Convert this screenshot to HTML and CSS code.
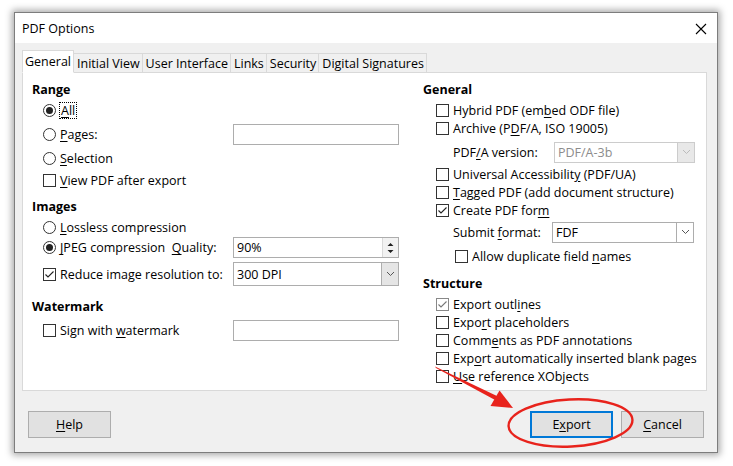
FILE: index.html
```html
<!DOCTYPE html>
<html>
<head>
<meta charset="utf-8">
<title>PDF Options</title>
<link rel="stylesheet" href="styles.css">
</head>
<body>
<div class="dialog">
  <div class="titlebar">
    <span class="title">PDF Options</span>
    <svg class="close" width="12" height="12" viewBox="0 0 12 12"><path d="M1 1L11 11M11 1L1 11" stroke="#000" stroke-width="1.1" fill="none"/></svg>
  </div>
  <div class="content">
    <div class="tabs">
      <div class="tab active">General</div>
      <div class="tab">Initial View</div>
      <div class="tab">User Interface</div>
      <div class="tab">Links</div>
      <div class="tab">Security</div>
      <div class="tab">Digital Signatures</div>
    </div>
    <div class="panel">
      <div class="col left">
        <div class="heading">Range</div>
        <div class="row r-all"><span class="radio on"></span><span class="focus"><u>A</u>ll</span></div>
        <div class="row r-pages"><span class="opt"><span class="radio"></span><span><u>P</u>ages:</span></span><span class="field"></span></div>
        <div class="row r-gap4"><span class="radio"></span><span><u>S</u>election</span></div>
        <div class="row r-gap4"><span class="box"></span><span><u>V</u>iew PDF after export</span></div>
        <div class="heading h-images">Images</div>
        <div class="row r-gap2"><span class="radio"></span><span><u>L</u>ossless compression</span></div>
        <div class="row r-jpeg"><span class="opt"><span class="radio on"></span><span><u>J</u>PEG compression&nbsp; <u>Q</u>uality:</span></span>
          <span class="field spin"><span class="val">90%</span><span class="spinbtn"><svg width="7" height="14" viewBox="0 0 7 14"><path d="M0.5 5L3.5 2L6.5 5Z M0.5 9L3.5 12L6.5 9Z" fill="#222"/></svg></span></span></div>
        <div class="row r-dpi"><span class="opt"><span class="box"><svg width="11" height="11" viewBox="0 0 11 11"><path d="M1.5 5.5L4 8L9.5 2.5" stroke="#222" stroke-width="1.1" fill="none"/></svg></span><span>Reduce ima<u>g</u>e resolution to:</span></span>
          <span class="field combo tall"><span class="val">300 DPI</span><span class="drop"><svg width="9" height="6" viewBox="0 0 9 6"><path d="M1 1L4.5 4.5L8 1" stroke="#555" stroke-width="1" fill="none"/></svg></span></span></div>
        <div class="heading h-water">Watermark</div>
        <div class="row r-sign"><span class="opt"><span class="box"></span><span>Sign with <u>w</u>atermark</span></span><span class="field"></span></div>
      </div>
      <div class="col right">
        <div class="heading">General</div>
        <div class="row r-gap2"><span class="box"></span><span>Hybrid PDF (em<u>b</u>ed ODF file)</span></div>
        <div class="row"><span class="box"></span><span>Archive (P<u>D</u>F/A, ISO 19005)</span></div>
        <div class="row r-sub r-pdfa"><span class="sublabel">PDF<u>/</u>A version:</span>
          <span class="field combo disabled"><span class="val">PDF/A-3b</span><span class="drop"><svg width="9" height="6" viewBox="0 0 9 6"><path d="M1 1L4.5 4.5L8 1" stroke="#bbb" stroke-width="1" fill="none"/></svg></span></span></div>
        <div class="row r-gap2"><span class="box"></span><span>Universal Accessibilit<u>y</u> (PDF/UA)</span></div>
        <div class="row"><span class="box"></span><span><u>T</u>agged PDF (add document structure)</span></div>
        <div class="row"><span class="box"><svg width="11" height="11" viewBox="0 0 11 11"><path d="M1.5 5.5L4 8L9.5 2.5" stroke="#222" stroke-width="1.1" fill="none"/></svg></span><span>Create PDF for<u>m</u></span></div>
        <div class="row r-sub r-submit"><span class="sublabel">Submit <u>f</u>ormat:</span>
          <span class="field combo submit"><span class="val">FDF</span><span class="drop"><svg width="9" height="6" viewBox="0 0 9 6"><path d="M1 1L4.5 4.5L8 1" stroke="#555" stroke-width="1" fill="none"/></svg></span></span></div>
        <div class="row r-gap4 r-indent"><span class="box"></span><span>Allow duplicate field <u>n</u>ames</span></div>
        <div class="heading h-struct">Structure</div>
        <div class="row r-gap2"><span class="box dim"><svg width="11" height="11" viewBox="0 0 11 11"><path d="M1.5 5.5L4 8L9.5 2.5" stroke="#777" stroke-width="1.1" fill="none"/></svg></span><span>Export outl<u>i</u>nes</span></div>
        <div class="row"><span class="box"></span><span>Expo<u>r</u>t placeholders</span></div>
        <div class="row"><span class="box"></span><span>Comm<u>e</u>nts as PDF annotations</span></div>
        <div class="row"><span class="box"></span><span>Exp<u>o</u>rt automatically inserted blank pages</span></div>
        <div class="row"><span class="box"></span><span><u>U</u>se reference XObjects</span></div>
      </div>
    </div>
    <div class="buttons">
      <button class="btn"><u>H</u>elp</button>
      <span class="spacer"></span>
      <button class="btn default">E<u>x</u>port</button>
      <button class="btn"><u>C</u>ancel</button>
    </div>
  </div>
</div>
<svg class="annot" width="733" height="466" viewBox="0 0 733 466">
  <ellipse cx="570.5" cy="423" rx="62" ry="23.5" transform="rotate(-3 570.5 423)" fill="none" stroke="#e8231c" stroke-width="2.4"/>
  <polygon points="435,366.5 436,368 496,400.5 498,396.5" fill="#e8231c"/>
  <polygon points="513,408 490.5,406 499.5,390.5" fill="#e8231c"/>
</svg>
</body>
</html>
```
FILE: styles.css
```css
* { box-sizing: border-box; }
body {
  margin: 0;
  background: #fff;
  font-family: "Open Sans", "Noto Sans", sans-serif;
  font-size: 12.5px;
  color: #000;
  width: 733px;
  height: 466px;
  overflow: hidden;
  position: relative;
}
u { text-decoration: underline; text-underline-offset: 2px; }
.dialog {
  margin: 12px 0 0 14px;
  width: 704px;
  height: 441px;
  border: 1px solid #7d7d7d;
  background: #f0f0f0;
  box-shadow: 0 0 7px 2px rgba(0,0,0,0.35);
  display: flex;
  flex-direction: column;
}
.titlebar {
  height: 30px;
  flex: none;
  background: #fff;
  display: flex;
  align-items: center;
  justify-content: space-between;
  padding: 1px 10px 0 7px;
}
.content {
  flex: 1;
  display: flex;
  flex-direction: column;
  padding: 8px 10px 0 7px;
}
.tabs {
  display: flex;
  align-items: flex-end;
  height: 22px;
  position: relative;
  z-index: 1;
  margin-bottom: -1px;
}
.tab {
  height: 20px;
  padding: 0 2px 0 3px;
  border: 1px solid #d9d9d9;
  border-left: none;
  background: #f0f0f0;
  line-height: 19px;
  white-space: nowrap;
}
.tab.active {
  height: 23px;
  border-left: 1px solid #d9d9d9;
  border-bottom: 1px solid #fff;
  background: #fff;
  padding: 0 2px 0 2px;
  line-height: 22px;
}
.panel {
  height: 319px;
  background: #fff;
  border: 1px solid #d9d9d9;
  display: flex;
  padding: 6px 0 0 9px;
}
.col { display: flex; flex-direction: column; }
.left { width: 367px; }
.right { width: 272px; margin-left: 24px; }
.heading { height: 20px; font-weight: bold; line-height: 21px; flex: none; }
.h-images { margin-top: 7px; }
.h-water { margin-top: 10px; }
.h-struct { margin-top: 8px; }
.row {
  height: 18px;
  display: flex;
  align-items: center;
  flex: none;
  white-space: nowrap;
}
.left .row { padding-left: 11px; }
.right .row { padding-left: 13px; }
.right .row.r-indent { padding-left: 32px; }
.right .row.r-sub { padding-left: 30px; }
.r-all { margin-top: 2px; }
.r-gap2 { margin-top: 2px; }
.r-gap4 { margin-top: 4px; }
.r-pages { margin-top: 4px; height: 22px; }
.r-jpeg { margin-top: 1px; height: 21px; }
.r-dpi { margin-top: 4px; height: 24px; }
.r-sign { margin-top: 4px; height: 20px; }
.r-pdfa { margin-top: 4px; height: 22px; }
.r-submit { margin-top: 2px; height: 22px; }
.opt { display: flex; align-items: center; width: 190px; flex: none; }
.radio {
  width: 13px; height: 13px;
  border: 1px solid #333;
  border-radius: 50%;
  background: #fff;
  margin-right: 4px;
  flex: none;
  display: flex;
  align-items: center;
  justify-content: center;
}
.radio.on::after {
  content: "";
  width: 7px; height: 7px;
  border-radius: 50%;
  background: #222;
}
.box {
  width: 13px; height: 13px;
  border: 1px solid #333;
  background: #fff;
  margin-right: 4px;
  flex: none;
  display: flex;
  align-items: center;
  justify-content: center;
}
.box.dim { border-color: #888; }
.focus { outline: 1px dotted #000; outline-offset: 0; padding: 0 1px; line-height: 15px; }
.field {
  width: 166px;
  height: 21px;
  border: 1px solid #adadad;
  background: #fff;
  display: flex;
  align-items: center;
  flex: none;
}
.field .val { flex: 1; padding-left: 3px; }
.field.tall { height: 24px; }
.spinbtn {
  width: 16px; height: 19px;
  border-left: 1px solid #d9d9d9;
  display: flex; align-items: center; justify-content: center;
  background: #f2f2f2;
}
.drop {
  width: 17px; align-self: stretch;
  border-left: 1px solid #adadad;
  background: #e5e5e5;
  display: flex; align-items: center; justify-content: center;
}
.sublabel { width: 101px; flex: none; }
.combo.disabled { width: 141px; border-color: #cccccc; color: #8c8c8c; }
.combo.disabled .drop { border-left-color: #cccccc; background: #e8e8e8; }
.combo.submit { width: 142px; margin-left: -2px; }
.combo.submit .drop { background: #fff; }
.buttons {
  display: flex;
  align-items: center;
  margin-top: 20px;
  padding: 0 3px 0 6px;
  gap: 8px;
}
.spacer { flex: 1; }
.btn {
  width: 83px;
  height: 27px;
  border: 1px solid #adadad;
  background: #e1e1e1;
  font-family: inherit;
  font-size: 12.5px;
  color: #000;
  padding: 0;
}
.btn.default { border: 2px solid #0078d7; }
.annot { position: absolute; left: 0; top: 0; pointer-events: none; }
```
